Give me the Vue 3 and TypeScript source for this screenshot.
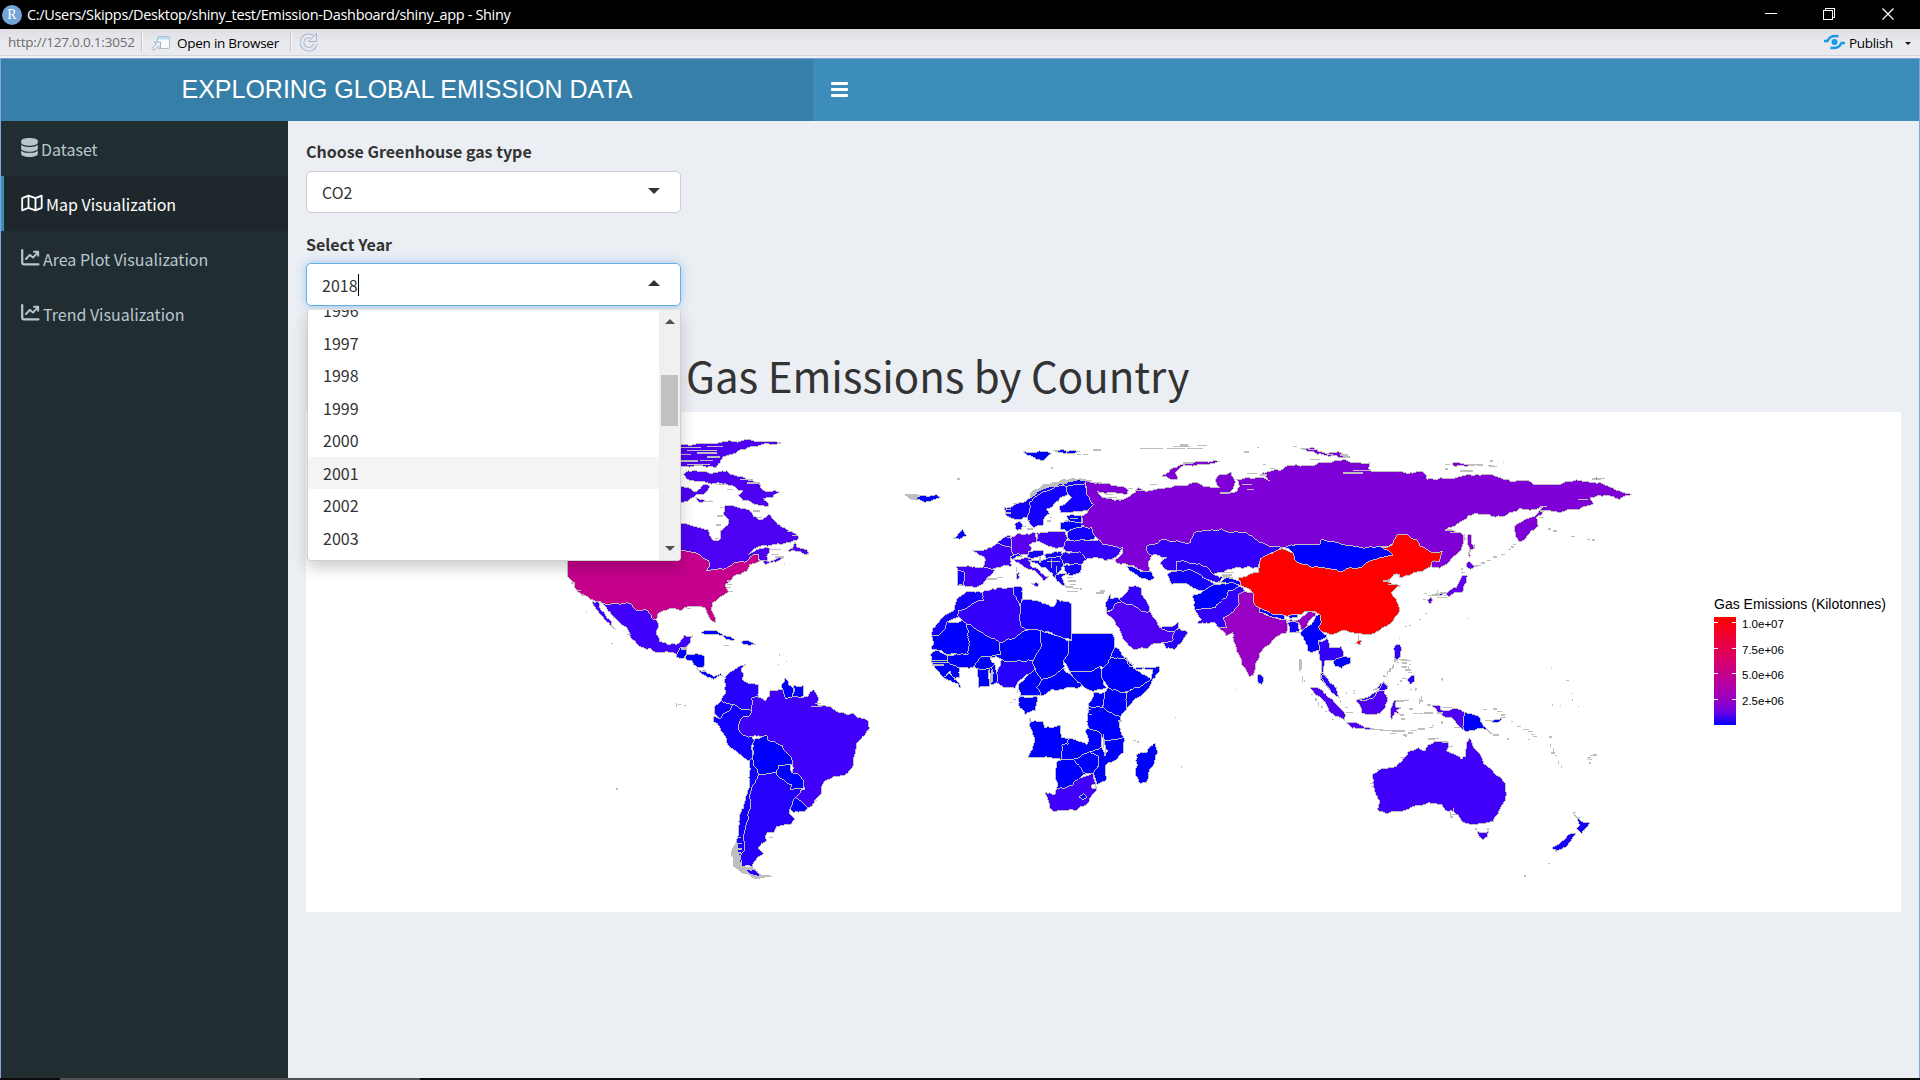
<script setup lang="ts">
type Shape = [fill: string, points: string]
interface Layer {
  x: number
  y: number
  shapes: Shape[]
  specks: string
}

const years: number[] = [1996, 1997, 1998, 1999, 2000, 2001, 2002, 2003]
const ticks: string[] = ['1.0e+07', '7.5e+06', '5.0e+06', '2.5e+06']

const B0 = '#0000ff'
const B1 = '#1400ff'
const B2 = '#2600fd'
const B3 = '#3200fb'
const V0 = '#4000f9'
const V1 = '#4e00f3'
const RU = '#7f00d6'
const GR = '#bebebe'

// Outlines are stored in thirds of a pixel, relative to the origin of each layer.
const layers: Layer[] = [
  {
    x: 540,
    y: 420,
    shapes: [
      [V1, '400,72 423,71 470,68 540,64 605,59 660,61 722,66 690,70 650,76 610,86 575,100 550,108 540,125 530,138 480,134 423,138 400,138'],
      [V1, '430,160 445,150 500,152 560,150 590,165 640,180 660,190 680,212 720,214 700,228 670,232 685,245 685,257 650,250 610,240 595,222 610,210 580,195 540,187 500,185 480,180 455,180 440,175'],
      [V1, '410,195 445,200 460,212 490,190 510,195 500,213 470,220 445,240 410,243'],
      [V1, '466,228 490,236 520,241 480,245'],
      [V1, '400,300 423,306 450,312 475,320 505,324 508,340 520,358 535,360 543,350 540,330 565,310 566,295 550,280 555,255 590,258 610,262 630,270 640,285 655,295 675,290 688,278 700,295 720,312 740,325 770,340 775,355 750,365 720,370 670,372 640,385 625,400 650,385 685,380 690,390 680,405 685,418 660,420 655,400 640,402 625,418 600,422 570,435 540,443 510,450 500,450 508,435 505,418 480,402 450,392 423,390 400,390'],
      [V1, '745,392 765,362 770,378 800,385 805,402 780,392'],
      [V1, '668,418 700,418 732,408 695,424 676,430'],
      ['#c5008c', '82,390 82,420 82,465 95,480 105,500 125,520 153,535 180,542 215,548 240,550 262,545 290,568 315,566 340,595 350,598 352,580 370,570 390,562 425,568 440,558 480,556 500,568 505,585 515,600 526,606 526,590 515,560 517,545 545,525 565,512 558,490 575,475 590,460 620,452 630,430 658,422 655,400 640,402 625,418 600,422 570,435 540,443 510,450 500,450 508,435 505,418 480,402 450,392 423,390'],
      [V0, '156,540 176,542 178,558 200,590 213,600 218,618 229,628 215,617 190,590 175,570'],
      [V0, '180,542 215,548 240,550 262,545 290,568 315,566 340,595 350,598 350,640 360,662 385,672 410,670 425,655 430,645 458,644 450,665 440,678 420,680 410,700 380,692 350,695 310,680 275,655 268,635 240,605 205,570 190,548'],
      [B0, '410,700 420,680 440,678 440,700 430,712 410,710'],
      [B0, '440,700 470,698 495,708 490,740 470,738 455,720 435,712'],
      [B0, '470,742 495,752 520,766 542,757 555,770 540,764 520,775 480,755'],
      [B0, '484,636 510,628 540,636 585,656 562,656 530,640'],
      [B0, '603,662 625,658 648,670 630,674 612,672'],
      [B2, '557,768 575,750 600,735 618,730 603,745 608,775 635,788 655,790 655,828 635,832 635,870 605,865 578,850 545,838 557,815'],
      [B1, '545,838 578,850 570,868 548,880 540,893 525,880 525,855'],
      [B1, '548,880 570,868 578,850 605,865 635,870 628,885 605,890 595,915 605,938 635,948 643,960 638,1010 630,1018 600,1000 570,980 555,945 540,920 520,900 520,885 540,893'],
      [V0, '635,832 655,828 675,840 690,825 690,810 728,806 735,832 770,828 805,826 820,806 835,830 830,850 870,855 890,872 940,876 965,892 985,900 988,920 965,950 948,970 945,1000 938,1040 915,1062 880,1068 848,1090 845,1115 825,1140 805,1160 790,1145 765,1130 795,1105 790,1080 775,1058 755,1055 757,1020 745,1000 730,985 728,975 685,960 680,942 655,945 635,948 605,938 595,915 605,890 628,885 635,870'],
      [B0, '725,790 735,770 747,785 745,790 760,800 757,828 740,832 730,810'],
      [B0, '760,795 792,793 790,825 757,828'],
      [B0, '643,955 680,942 685,960 728,975 730,985 745,1000 757,1020 755,1032 715,1035 708,1055 690,1058 655,1062 640,1030 638,1010'],
      [B0, '708,1055 715,1035 752,1032 755,1055 775,1058 790,1080 792,1100 750,1105 755,1090 720,1072'],
      [B0, '765,1130 805,1160 795,1172 760,1175 750,1165 755,1140'],
      [B2, '655,1062 690,1058 708,1055 720,1072 755,1090 750,1105 792,1100 765,1130 750,1165 748,1178 765,1195 752,1212 710,1215 700,1235 680,1236 680,1260 655,1280 672,1298 640,1325 638,1340 605,1335 600,1310 612,1290 612,1240 625,1190 632,1160 628,1130 645,1085'],
      [B1, '630,1018 638,1010 640,1030 655,1062 645,1085 628,1130 632,1160 625,1190 612,1240 612,1290 600,1310 605,1335 580,1330 578,1300 592,1250 598,1195 612,1160 622,1110 630,1060'],
      [GR, '574,1300 590,1262 596,1300 604,1340 640,1342 662,1362 695,1367 655,1374 610,1358 580,1336'],
      [B2, '618,1345 645,1345 660,1365 632,1360'],
    ],
    specks:
      'M423 80h60M440 88h90M423 100h30M470 96h60M500 108h40M423 120h50M480 118h40M440 130h70M500 76h50M600 176h40M620 186h40M560 205h20M530 190h30M540 260h8M530 285h18M528 312h14M524 352h12M640 270h20M650 290h16M690 386h34M694 400h24M704 408h28M560 480h14M560 490h16M560 500h14M566 512h12M92 486h12M110 508h12M122 522h10M138 572h3M213 668h5M410 846v12M414 850h10M432 854h5M552 674h14M718 698v8M738 722h3M715 730h3M590 1250h14M586 1268h20M584 1284h22M580 1296h22M231 1102v5M812 856h34M826 848h16M822 1138h8M688 1250h10M420 1 M423 684h14M486 748h12M732 430h3M262 640h10M440 562h14M800 398h8M740 332h20M756 344h16',
  },
  {
    x: 900,
    y: 430,
    shapes: [
      [GR, '15,192 40,190 60,195 50,208 25,200'],
      [B0, '45,203 60,195 110,190 122,200 75,214'],
      [B0, '160,322 175,308 188,295 200,315 180,325'],
      [B0, '370,62 430,62 455,68 430,90 400,78'],
      [B0, '460,60 490,56 525,58 540,62 500,66'],
      [GR, '390,195 400,178 430,162 480,150 520,143 575,148 560,158 480,160 430,180 400,200'],
      [B1, '312,230 345,220 390,200 430,174 480,158 520,150 565,152 555,158 500,168 470,165 440,180 410,195 388,215 388,240 380,258 345,265 320,255'],
      [B1, '388,215 410,195 440,180 470,165 500,168 505,190 480,200 440,235 450,248 430,265 430,282 400,290 385,270 380,258 388,240'],
      [B1, '500,168 555,158 560,185 570,200 580,220 560,240 520,242 482,245 480,225 515,200 505,190'],
      [B1, '345,280 360,270 367,282 365,295 350,298'],
      ['#5800f0', '330,318 355,308 405,305 410,330 388,342 395,355 385,370 340,370 335,350'],
      [V0, '410,305 450,300 495,303 503,320 500,348 450,348 410,330'],
      [B2, '290,335 310,320 330,312 335,350 315,345'],
      [V0, '215,358 245,360 290,338 315,345 335,350 340,370 330,380 335,405 300,410 280,414 250,408 255,380'],
      [V0, '170,405 200,405 250,408 285,416 262,440 250,460 225,470 200,468 190,462 195,425 172,420'],
      [B1, '172,420 195,425 190,462 172,462'],
      [V0, '340,385 380,378 395,385 390,400 430,430 445,440 430,450 415,430 375,410 360,398'],
      [V0, '393,458 418,458 408,468'],
      [V0, '348,428 358,425 358,442 350,445'],
      [B1, '330,375 355,368 370,378 335,385'],
      [B1, '385,362 430,358 430,372 380,380'],
      [B1, '432,372 485,360 485,378 440,385'],
      [B1, '385,390 440,382 485,378 490,402 470,430 495,430 465,440 440,412 415,400'],
      [B2, '480,380 495,362 540,362 560,385 545,402 490,400'],
      [B1, '490,402 545,402 540,425 500,430'],
      [B1, '465,436 510,426 485,440 497,466 480,455'],
      [B3, '490,355 500,328 545,325 580,328 610,322 640,345 668,350 660,370 620,390 590,380 560,385 540,362 500,362'],
      [B1, '500,300 545,288 575,290 588,310 580,326 545,325 505,326'],
      [B0, '480,275 505,270 545,272 545,288 500,302 480,295'],
      [B0, '500,256 545,252 545,272 505,270'],
      [B1, '165,535 170,510 200,480 245,485 250,510 175,540 175,558 145,572 130,600 120,612 95,612 110,580 135,552'],
      [B0, '95,615 118,612 138,590 140,572 200,570 200,580 205,670 145,672 125,660 95,655 100,640'],
      [B3, '245,485 265,478 300,468 342,468 340,490 360,525 360,580 385,597 300,635 200,580 175,558 175,540 250,510'],
      [B1, '342,468 368,470 365,510 360,525 340,490'],
      [B1, '360,525 368,505 400,508 440,520 460,528 470,505 515,518 515,628 420,598 385,597 360,580'],
      [B0, '515,608 638,608 645,640 632,680 608,710 600,705 575,722 510,722 490,690 505,668 505,630 515,628'],
      [B0, '420,598 505,630 505,668 490,690 492,710 460,735 425,745 405,710 400,688 425,640'],
      [B0, '300,635 385,597 420,598 425,640 400,688 350,690 305,685 270,678 303,670'],
      [B0, '200,580 300,635 303,670 270,678 240,680 215,710 180,710 145,695 140,672 205,670'],
      [B0, '90,670 110,658 140,672 145,695 95,695'],
      [B0, '95,695 145,695 180,710 180,740 160,740 150,720 130,740 110,715'],
      [B0, '130,740 150,725 160,740 182,765 182,772'],
      [B0, '232,712 268,712 270,765 235,770'],
      [B0, '215,710 240,680 270,678 285,700 268,712 232,712'],
      [B0, '268,712 285,700 290,725 290,755 270,760'],
      [B0, '276,712 276,756'],
      [B2, '290,725 305,685 350,690 400,688 405,710 385,730 355,752 345,772 320,770 290,755'],
      [B0, '355,760 385,730 405,710 425,745 410,770 425,795 360,795'],
      [B0, '410,770 425,745 460,735 492,710 510,730 545,765 490,775 455,775 425,795'],
      [B0, '510,722 575,722 600,705 608,740 620,770 580,782 555,770 530,750'],
      [B0, '632,680 680,680 700,710 745,740 755,742 720,768 670,785 625,770 605,740 608,710'],
      [B0, '645,650 665,670 700,700 690,708 680,680 632,680'],
      [B0, '700,712 780,705 765,740 740,780 700,810 680,830 680,785 720,768 755,742 757,715'],
      [B0, '612,785 625,770 670,785 680,785 680,830 660,858 608,828 610,800'],
      [B0, '565,825 580,785 612,785 608,828'],
      [B0, '565,825 608,828 660,858 662,900 672,920 615,928 600,905 565,892 562,860'],
      [B0, '360,795 410,795 408,838 375,850 355,822'],
      [B0, '390,875 430,872 435,890 482,885 485,920 505,922 505,940 485,942 485,985 385,978 405,925'],
      [B0, '485,942 505,940 505,922 560,940 565,930 555,900 565,892 600,905 605,950 570,962 520,985 485,985'],
      [B0, '475,990 520,985 560,1028 540,1040 520,1062 470,1072 468,1030'],
      [B0, '520,985 570,962 595,975 597,1005 580,1028 560,1028'],
      [B0, '615,928 672,920 672,965 615,1005 620,1045 590,1060 580,1028 597,1005 595,975 570,962 605,950 615,975 622,960'],
      [V0, '435,1085 466,1090 470,1072 520,1062 540,1040 580,1028 587,1058 590,1075 560,1120 530,1138 462,1143 447,1130'],
      [B0, '537,1097 550,1088 560,1098 548,1107'],
      ['#ffffff', '575,1062 588,1062 590,1074 578,1074'],
      [B0, '710,970 740,965 765,935 773,960 755,1010 740,1055 715,1055 705,1025 712,1000'],
    ],
    specks:
      'M170 144h10M453 111h5M530 70h14M550 70h14M580 57h24M720 53h50M760 52h28M800 52h54M820 47h50M840 42h24M860 52h50M890 44h30M318 236h14M316 246h16M340 218h16M380 294h20M366 286h12M440 270h14M450 260h6M350 408v14M260 444h30M290 440h18M500 440h18M505 450h24M510 460h18M498 468h22M500 482h34M520 472h16M540 474h6M588 486h24M600 480h14M620 385h20M390 268h-10M575 155h30M614 190h26M620 200h30M650 206h24M276 716v38M330 815h6M340 806h8M352 778v8M390 862v10M610 910v40M616 950v24M560 835h12M566 850h10M655 870h12M96 688h44M96 702h36M700 928h8M712 933h5M824 859h3M845 1006v6M176 460h10M436 436h10M440 392h40M455 385v25M470 405v20M420 376v20M320 320h14M496 268h14M510 262h24',
  },
  {
    x: 1060,
    y: 430,
    shapes: [
      [RU, '75,148 120,158 170,165 205,178 200,190 160,185 110,180 135,200 165,208 190,205 225,185 235,170 260,182 300,172 380,165 400,155 480,170 465,150 480,130 515,125 522,145 522,172 510,186 530,182 538,165 530,145 560,138 600,140 630,150 605,125 660,118 680,105 800,95 850,85 930,95 925,112 935,122 1025,122 1080,120 1090,122 1100,145 1190,140 1220,130 1300,132 1330,145 1400,148 1420,160 1500,160 1520,152 1600,155 1660,172 1680,180 1715,190 1680,205 1650,195 1615,192 1590,200 1600,220 1550,235 1510,242 1450,240 1430,260 1435,285 1420,298 1375,332 1362,295 1370,280 1430,250 1450,228 1410,238 1380,232 1330,257 1290,252 1225,255 1185,285 1155,297 1200,305 1212,320 1205,350 1160,400 1140,412 1115,408 1115,392 1140,390 1148,362 1110,362 1080,345 1070,325 1045,312 1010,312 998,340 960,346 905,350 830,335 785,325 780,340 710,340 665,350 605,335 560,305 515,305 485,293 400,308 390,335 300,328 260,345 265,368 275,372 265,395 270,420 240,415 165,392 185,370 188,350 160,345 130,342 100,310 95,290 65,280 65,255 85,240 100,220 80,190'],
      [RU, '306,136 330,115 370,100 430,93 480,90 420,100 370,105 345,125 352,147 325,142'],
      [RU, '720,52 755,48 790,65 850,70 870,78 810,76 760,62'],
      [B3, '200,485 205,468 225,464 245,472 245,490 262,515 270,540 245,542 215,520 185,512 178,503'],
      [B1, '135,518 150,488 152,505 178,503 185,512 165,518 160,535 140,542'],
      [V1, '137,545 160,535 165,518 185,512 215,520 245,542 270,540 300,590 320,600 345,600 340,628 310,635 275,640 265,652 220,655 200,635 180,600 165,570'],
      [B2, '300,590 330,588 355,572 350,600 320,600'],
      [B2, '345,600 355,592 385,605 365,635 345,655 318,652 310,635 340,628'],
      [B0, '200,405 240,420 275,422 285,440 270,450 230,432'],
      [B3, '260,345 300,328 390,335 400,308 485,293 515,305 560,305 605,335 665,350 650,365 625,370 600,390 595,410 570,408 520,412 490,425 460,430 430,405 370,388 350,390 350,420 325,418 300,398 320,378 290,372 265,368'],
      [B2, '350,390 370,388 430,405 460,430 490,440 470,455 440,445 410,425 385,415 350,420'],
      [B1, '322,430 350,420 385,415 410,425 440,445 465,460 430,480 400,472 370,458 335,460'],
      [B0, '470,455 505,440 535,448 545,465 510,462 495,455'],
      [B0, '400,490 430,480 465,460 510,455 540,465 505,480 500,500 465,530 405,538'],
      [B3, '405,538 465,530 500,500 505,480 540,465 555,480 535,490 535,525 500,555 490,560 500,588 475,590 465,575 410,575 425,565'],
      ['#9800c3', '475,590 500,588 490,560 500,555 535,525 535,490 555,480 580,485 580,510 597,530 597,542 640,560 680,565 680,605 640,625 600,665 590,690 580,735 568,738 545,700 525,640 518,605 500,615'],
      ['#9800c3', '685,568 720,565 745,540 768,545 740,590 725,600 718,575 690,574'],
      [B0, '597,530 640,550 675,555 675,565 640,560 600,545'],
      [B0, '685,552 715,550 712,560 688,562'],
      [B1, '680,572 715,575 718,600 690,605'],
      ['#ff0000', '665,353 700,365 705,388 755,410 850,420 905,408 920,395 960,378 998,372 975,355 960,350 998,340 1010,312 1045,312 1070,325 1080,345 1110,362 1148,362 1140,390 1115,392 1110,408 1060,425 1020,440 1020,430 1000,432 978,450 1000,462 1022,464 994,485 1005,500 1015,520 1018,540 990,580 960,598 910,610 870,605 850,598 815,612 800,605 775,590 785,575 778,550 745,540 715,550 675,555 640,550 597,530 580,510 580,485 555,470 545,465 535,440 595,425 600,390 625,370 650,358'],
      ['#ff0000', '886,638 895,630 905,630 900,642'],
      [B0, '675,350 710,340 780,340 785,325 830,335 905,350 960,346 975,355 998,372 960,378 920,395 905,408 850,420 755,410 705,388 700,365'],
      [B0, '725,600 745,585 765,560 778,550 785,575 775,590 800,612 800,620 775,630 780,660 745,662 735,630 722,612'],
      [B3, '775,635 800,620 810,650 845,645 852,680 820,690 795,690 788,725 805,745 815,762 830,775 830,790 812,778 782,745 785,720 778,680'],
      [B0, '822,690 840,680 872,680 870,698 845,712 825,705'],
      [B1, '593,732 602,730 611,748 605,760 595,757'],
    ],
    specks:
      'M225 178h24M270 160h20M205 172h14M700 47h10M745 56h30M800 70h20M840 72h24M552 63h16M590 50h8M610 100h8M630 112h16M560 128h30M600 132h20M545 160h30M560 175h22M850 126h60M880 118h50M482 424h40M486 432h30M490 438h20M500 440h20M720 685v22M724 700v14M728 738v14M896 612v16M527 776h3M370 96h30M110 485h14M750 85h30M480 186h30M970 450h20M984 460h16M700 604h20',
  },
  {
    x: 1340,
    y: 430,
    shapes: [
      [RU, '385,310 393,312 396,340 404,352 392,355 388,380 386,345'],
      [RU, '335,100 360,96 410,101 380,106 345,106'],
      [RU, '755,144 770,140 794,141 775,145'],
      [RU, '445,104 470,106 450,108'],
      ['#6000ec', '380,395 388,392 398,402 415,405 392,416 380,408'],
      ['#6000ec', '368,432 382,434 380,455 368,482 345,484 325,497 318,486 350,468'],
      ['#6000ec', '262,506 274,498 278,508 268,520'],
      [V0, '285,488 316,486 300,494'],
      [B3, '162,650 172,640 182,645 182,668 172,690 162,672'],
      [B2, '202,745 212,735 225,735 224,750 212,760'],
      [B3, '98,778 115,768 130,752 146,766 130,776'],
    ],
    specks:
      'M0 70h10M10 76h20M315 100h14M315 114h10M360 120h40M450 90h8M489 94h3M410 102h20M624 294h10M640 300h10M694 317h12M742 325h8M756 327h10M714 205h30M600 226h22M600 240h10M598 260h14M505 355h8M512 348h10M520 340h8M482 370h12M460 378h10M440 388h12M424 396h12M412 404h10M362 414h8M364 424h10M292 478v10M276 492h24M300 486h20M252 488h8M248 506h10M264 494h20M290 500h30M312 494h10M254 548h6M238 566h6M385 562h3M206 584h8M195 586h6M178 622h2M168 694h10M176 686h24M186 696h16M206 700h8M186 708h14M196 716h16M204 724h12M186 742h14M160 700v10M150 712v10M142 724v8M132 736h8M170 760h8M180 750h6M306 740v8M634 712h3M679 749h7M228 772v6M374 310v20M370 322h12M404 340v14M316 296h20M330 304h20M108 602h10',
  },
  {
    x: 1280,
    y: 600,
    shapes: [
      [V1, '90,258 115,262 150,290 180,320 195,340 195,360 165,345 130,300'],
      [B3, '122,215 150,245 170,260 178,290 155,275 130,240'],
      [V1, '197,365 240,370 282,384 230,382'],
      [V1, '228,295 260,297 300,265 312,270 322,300 300,338 245,335'],
      [B3, '228,295 260,290 300,262 310,245 325,258 312,268 298,270 278,294 252,300'],
      [V1, '335,358 333,320 342,300 388,297 346,304 348,318 364,320 350,328 364,345 345,332'],
      [V1, '455,315 480,315 483,326 520,323 553,333 553,388 540,378 515,350 490,345 470,328'],
      [B0, '553,333 600,350 610,375 640,400 600,382 575,390 553,390'],
      [B0, '634,362 660,354 668,348 655,364'],
      [V0, '278,520 300,505 350,495 390,450 415,440 435,450 445,430 470,420 505,422 500,450 545,475 558,465 560,425 567,410 580,440 600,460 610,488 640,510 675,545 680,580 665,615 640,662 575,672 545,662 525,635 500,630 485,612 445,605 410,612 375,628 315,637 295,630 298,600 280,550'],
      [V0, '590,692 628,692 622,708 610,716 600,710'],
      [B1, '880,638 905,662 930,666 918,680 905,697 890,682 900,672'],
      [B1, '888,698 872,722 850,740 830,748 815,742 850,718 872,696'],
      [B0, '920,475 936,475'],
    ],
    specks:
      'M64 178v16M60 196v14M68 226v6M74 238v4M94 280h6M108 290v10M116 302v12M124 318h6M134 332h8M196 320h8M198 334h22M200 278v-4M218 268h8M224 274v6M182 296v10M280 386h30M300 388h50M336 390h40M330 398h18M370 402h10M374 406h8M384 396h14M392 388h20M414 384h20M448 380h10M456 374h6M386 324h14M400 338h14M418 338h10M432 336h26M418 290v20M424 286v18M418 300h12M350 298h30M360 342h12M364 354h10M440 312h14M485 320h30M470 336h18M486 360v10M522 380h20M610 326h10M640 324h10M650 332h16M664 342h12M670 350h8M614 358h28M694 362h6M710 376h12M730 386h16M744 392h16M752 400h14M760 406h10M640 402h18M680 414h6M745 416h5M808 408h8M812 430v8M820 440v16M814 456h12M824 464h8M836 480v8M844 494v6M920 470h14M930 464h12M940 462h10M926 486h6M858 239h8M875 276v4M878 294v6M840 314h4M816 312h3M894 316h3M814 202h3M565 52h2M487 232v8M393 264v4M406 262v8M345 170v14M362 178h30M362 196h10M374 208h20M386 196v14M445 414h20M460 412h18M486 424h22M508 436h10M362 470h14M270 548h8M272 556h8M290 506h10M512 632v14M514 640h16M520 620v14M510 648h8M584 684h6M622 684h6M878 634h10M890 650h12M804 787h6M732 825h6M824 750h6M156 356h6M312 222v6M320 212h8M330 202h8M338 194v8',
  },
]

// Stable pseudo-random value, symmetric in both end points so shared borders agree.
function jitter(a: number[], b: number[], ox: number, oy: number, k: number): number {
  const s = Math.sin((a[0] + b[0] + ox * 6) * 12.9898 + (a[1] + b[1] + oy * 6) * 78.233 + k * 37.7) * 43758.5453
  return s - Math.floor(s) - 0.5
}

function split(a: number[], b: number[], l: Layer, out: number[][]): void {
  const len = Math.hypot(b[0] - a[0], b[1] - a[1])
  const straight = a[0] === b[0] || a[1] === b[1]
  if (len < 11 || (straight && len > 60)) {
    out.push(b)
    return
  }
  const amp = Math.min(len * 0.28, 9)
  const mid = [
    (a[0] + b[0]) / 2 + jitter(a, b, l.x, l.y, 1) * amp,
    (a[1] + b[1]) / 2 + jitter(a, b, l.x, l.y, 2) * amp,
  ]
  split(a, mid, l, out)
  split(mid, b, l, out)
}

function outline(points: string, l: Layer): string {
  const pts = points.split(' ').map((p) => p.split(',').map(Number))
  const out: number[][] = []
  pts.forEach((p, i) => split(p, pts[(i + 1) % pts.length], l, out))
  return out.map((p) => p[0].toFixed(1) + ',' + p[1].toFixed(1)).join(' ')
}
</script>

<template>
  <div class="window">
    <header class="titlebar">
      <span class="r-logo">R</span>
      <span class="path">C:/Users/Skipps/Desktop/shiny_test/Emission-Dashboard/shiny_app - Shiny</span>
      <svg class="win-buttons" width="150" height="29" viewBox="0 0 150 29" fill="none" stroke="#fff" stroke-width="1">
        <path d="M15 13.5h12M73.500 10.500h9v9h-9zM75.500 10.500v-2h9v9h-2" shape-rendering="crispEdges" />
        <path d="M132.500 8.500l11 11M143.500 8.500l-11 11" stroke-width="1.200" />
      </svg>
    </header>

    <div class="toolbar">
      <span class="url">http://127.0.0.1:3052</span>
      <i class="sep"></i>
      <svg class="open-icon" width="20" height="16" viewBox="0 0 20 16">
        <rect x="6.500" y="1.500" width="12" height="12" rx="1.500" fill="#f6fafd" stroke="#a9bfd2" />
        <path d="M7 2h11v2.500H7z" fill="#b9dcf3" />
        <path d="M.8 13.500l4.500-4.500-2-2h6.200v6l-2-2-4.500 4.200z" fill="#eef1f6" stroke="#9aa9be" stroke-width=".9" />
      </svg>
      <span class="open">Open in Browser</span>
      <i class="sep second"></i>
      <svg class="reload" width="20" height="20" viewBox="0 0 20 20" fill="none">
        <path d="M14.200 5.500A6.700 6.700 0 1 0 16.300 12" stroke="#a9b6cb" stroke-width="4.600" />
        <path d="M14.200 5.500A6.700 6.700 0 1 0 16.300 12" stroke="#e3e9f2" stroke-width="2.800" />
        <path d="M17.500 1.500v8h-8z" fill="#e3e9f2" stroke="#a9b6cb" />
      </svg>
      <div class="publish">
        <svg width="21" height="16" viewBox="0 0 21 16" fill="none" stroke="#1a9be8" stroke-width="2.400">
          <circle cx="10.500" cy="8" r="3" fill="#1a9be8" stroke="none" />
          <path d="M0 7h3.500C5 3 8 1.400 14.500 2.200M21 9h-3.500C16 13 13 14.600 6.500 13.800" />
        </svg>
        <span>Publish</span>
        <i class="caret-small"></i>
      </div>
    </div>

    <div class="app">
      <header class="main-header">
        <div class="logo">EXPLORING GLOBAL EMISSION DATA</div>
        <nav class="navbar"><span class="burger"><i></i><i></i><i></i></span></nav>
      </header>
      <div class="body">
        <aside class="sidebar">
          <a class="item">
            <svg width="17" height="19" viewBox="0 0 448 512" fill="currentColor">
              <path d="M448 80v48c0 44.200-100.300 80-224 80S0 172.200 0 128V80C0 35.800 100.300 0 224 0S448 35.800 448 80zM393.200 214.700c20.800-7.400 39.900-16.900 54.800-28.600V288c0 44.200-100.300 80-224 80S0 332.200 0 288V186.100c14.900 11.800 34 21.200 54.800 28.600C99.700 230.700 159.500 240 224 240s124.300-9.300 169.200-25.300zM0 346.100c14.900 11.800 34 21.200 54.800 28.600C99.700 390.700 159.500 400 224 400s124.300-9.300 169.200-25.300c20.800-7.400 39.900-16.900 54.800-28.600V432c0 44.200-100.300 80-224 80S0 476.200 0 432V346.100z" />
            </svg>
            <span class="t1">Dataset</span>
          </a>
          <a class="item active">
            <svg width="22" height="18" viewBox="0 0 22 18" fill="none" stroke="currentColor" stroke-width="1.800" stroke-linejoin="round">
              <path d="M1.200 4.200L7.500 1.600l7 2.600 6.200-2.600v12.200l-6.200 2.600-7-2.600-6.300 2.600zM7.500 1.600v12.200M14.500 4.200v12.200" />
            </svg>
            <span class="t2">Map Visualization</span>
          </a>
          <a class="item">
            <svg width="19" height="17" viewBox="0 0 19 17" fill="none" stroke="currentColor" stroke-width="2.200" stroke-linecap="round" stroke-linejoin="round">
              <path d="M1.200 1.200v12.300q0 1.800 1.800 1.800h14.500" />
              <path d="M5 10l3.800-4.200 3.200 2.800 4.800-5.200M13 2.700h4.200v4" stroke-width="1.900" />
            </svg>
            <span class="t3">Area Plot Visualization</span>
          </a>
          <a class="item">
            <svg width="19" height="17" viewBox="0 0 19 17" fill="none" stroke="currentColor" stroke-width="2.200" stroke-linecap="round" stroke-linejoin="round">
              <path d="M1.200 1.200v12.300q0 1.800 1.800 1.800h14.500" />
              <path d="M5 10l3.800-4.200 3.200 2.800 4.800-5.200M13 2.700h4.200v4" stroke-width="1.900" />
            </svg>
            <span class="t4">Trend Visualization</span>
          </a>
        </aside>

        <main class="content">
          <label class="label">Choose Greenhouse gas type</label>
          <div class="select"><span>CO2</span><i class="caret"></i></div>
          <label class="label second-label">Select Year</label>
          <div class="select focus">
            <span class="typed">2018</span><i class="caret up"></i>
            <div class="dropdown">
              <div class="options">
                <div v-for="y in years" :key="y" class="option" :class="{ hot: y === 2001 }">{{ y }}</div>
              </div>
              <div class="scrollbar">
                <i class="arrow up"></i>
                <i class="thumb"></i>
                <i class="arrow down"></i>
              </div>
            </div>
          </div>
          <h1 class="heading">Gas Emissions by Country</h1>
          <section class="plot">
            <svg class="map" width="1390" height="500" viewBox="306 411 1390 500" shape-rendering="crispEdges">
              <g
                v-for="(l, i) in layers"
                :key="i"
                :transform="`translate(${l.x} ${l.y}) scale(0.33333)`"
                stroke="#bebebe"
                stroke-width="3"
              >
                <polygon v-for="(s, j) in l.shapes" :key="j" :fill="s[0]" :points="outline(s[1], l)" />
                <path :d="l.specks" fill="none" stroke-width="4" />
              </g>
            </svg>
            <div class="legend">
              <div class="legend-title">Gas Emissions (Kilotonnes)</div>
              <div class="scale">
                <div class="bar"><i v-for="t in ticks" :key="t"></i></div>
                <div class="tick-labels"><span v-for="t in ticks" :key="t">{{ t }}</span></div>
              </div>
            </div>
          </section>
        </main>
      </div>
    </div>
    <footer class="taskbar"><i></i></footer>
  </div>
</template>

<style>
html,
body {
  margin: 0;
  overflow: hidden;
}
</style>

<style scoped>
* {
  box-sizing: border-box;
}
.window {
  width: 1920px;
  height: 1080px;
  display: flex;
  flex-direction: column;
  overflow: hidden;
  font-family: 'Noto Sans CJK SC', 'Noto Sans', sans-serif;
  white-space: nowrap;
}
.titlebar {
  height: 29px;
  background: #000;
  color: #fff;
  display: flex;
  align-items: center;
  font: 14.500px/29px 'Open Sans', sans-serif;
}
.r-logo {
  width: 20px;
  height: 20px;
  margin-left: 2px;
  border-radius: 50%;
  background: #73a5da;
  font: 14px/20px 'Liberation Serif', serif;
  text-align: center;
}
.path {
  margin-left: 5px;
  letter-spacing: -0.330px;
}
.win-buttons {
  margin-left: auto;
  margin-right: 20px;
}
.toolbar {
  height: 30px;
  display: flex;
  align-items: center;
  padding: 0 8px 4px;
  border-bottom: 1px solid #7f9fd6;
  background: linear-gradient(#dfdde3, #e8e9ed 12px, #ebebef 26px, #d3d5dc 26px, #d3d5dc 27px, #eef0f5 27px);
  font: 13.500px/24px 'Open Sans', sans-serif;
  color: #000;
}
.url {
  color: #6b6b6b;
  width: 133px;
  letter-spacing: -0.200px;
}
.sep {
  width: 2px;
  height: 20px;
  background: #c6c7cc;
  border-right: 1px solid #f7f7f9;
}
.open-icon {
  margin-left: 8px;
  margin-top: 2px;
}
.open {
  margin: 3px 0 0 6px;
  width: 113px;
  letter-spacing: -0.250px;
}
.reload {
  margin-left: 7px;
}
.publish {
  margin: 3px 1px 0 auto;
  display: flex;
  align-items: center;
}
.publish span {
  margin-left: 4px;
  width: 56px;
  letter-spacing: -0.300px;
}
.publish svg {
  margin-top: -3px;
}
.caret-small {
  border: 3px solid transparent;
  border-top-color: #111;
  border-bottom: 0;
}
.app {
  height: 1019px;
  border-left: 1px solid #7fa6de;
  border-right: 1px solid #7fa6de;
}
.main-header {
  height: 62px;
  display: flex;
}
.logo {
  width: 812px;
  background: #367fa9;
  color: #fff;
  text-align: center;
  font: 25px/61px 'Liberation Sans', sans-serif;
}
.navbar {
  flex: 1;
  background: #3c8dbc;
  padding: 23px 0 0 18px;
}
.burger {
  width: 17px;
  display: flex;
  flex-direction: column;
  gap: 3px;
}
.burger i {
  height: 3px;
  border-radius: 1px;
  background: #fff;
}
.body {
  height: 957px;
  display: flex;
}
.sidebar {
  width: 287px;
  background: #222d32;
}
.item {
  height: 55px;
  display: flex;
  align-items: center;
  padding: 0 0 0 17px;
  border-left: 3px solid transparent;
  color: #b8c7ce;
  font-size: 16px;
  line-height: 24px;
}
.item span {
  margin-left: 3px;
}
.item svg {
  flex: none;
  margin-top: -2px;
}
.item.active {
  background: #1e282c;
  border-left-color: #3c8dbc;
  color: #fff;
}
.content {
  flex: 1;
  padding: 18px 18px 0;
  background: #ebeef3;
  color: #333;
}
.label {
  display: block;
  height: 25px;
  font-size: 16px;
  line-height: 25px;
  font-weight: 700;
}
.select {
  position: relative;
  width: 375px;
  height: 42px;
  margin-top: 7px;
  padding: 0 20px 0 15px;
  border: 1px solid #ccc;
  border-radius: 5px;
  background: #fff;
  display: flex;
  align-items: center;
  justify-content: space-between;
  font-size: 16px;
  line-height: 40px;
}
.second-label {
  margin-top: 19px;
}
.select.focus {
  height: 43px;
  margin-top: 6px;
  border-color: #66afe9;
  box-shadow: 0 0 10px rgba(102, 175, 233, 0.6);
}
.typed {
  line-height: 22px;
  border-right: 1px solid #000;
}
.caret {
  border: 6px solid transparent;
  border-top-color: #333;
  border-bottom: 0;
  margin-top: -2px;
}
.caret.up {
  border: 6px solid transparent;
  border-bottom-color: #333;
  border-top: 0;
  margin-top: -4px;
}
.dropdown {
  position: absolute;
  z-index: 3;
  left: 0;
  top: 45px;
  width: 374px;
  height: 252px;
  display: flex;
  overflow: hidden;
  background: #fff;
  border: 1px solid #d0d0d0;
  border-top-color: #e4e4e4;
  border-radius: 4px;
}
.select.focus::after {
  content: '';
  position: absolute;
  left: 0;
  top: 45px;
  width: 374px;
  height: 252px;
  border-radius: 4px;
  box-shadow: 0 7px 15px rgba(0, 0, 0, 0.2);
}
.options {
  flex: 1;
  margin-top: -16px;
}
.option {
  height: 32.500px;
  padding-left: 15px;
  line-height: 32px;
  font-size: 16px;
}
.option.hot {
  background: #f4f4f4;
}
.scrollbar {
  width: 21px;
  background: #f0f0f0;
  display: flex;
  flex-direction: column;
  align-items: center;
}
.arrow {
  border: 5px solid transparent;
}
.arrow.up {
  border-top: 0;
  border-bottom-color: #505050;
  margin-top: 9px;
}
.arrow.down {
  border-bottom: 0;
  border-top-color: #505050;
  margin-top: 120px;
}
.thumb {
  width: 17px;
  height: 51px;
  margin-top: 51px;
  background: #c1c1c1;
}
.heading {
  margin: 33px 0 0 380px;
  height: 73px;
  font-weight: 400;
  font-size: 42px;
  line-height: 72px;
}
.plot {
  width: 1595px;
  height: 500px;
  display: flex;
  background: #fff;
}
.map {
  flex: none;
  margin-right: 18px;
}
.legend {
  padding-top: 183px;
  font-family: 'Liberation Sans', sans-serif;
  color: #000;
}
.legend-title {
  font-size: 14px;
  line-height: 18px;
  height: 22px;
}
.scale {
  display: flex;
}
.bar {
  width: 22px;
  height: 108px;
  padding-top: 5px;
  background: linear-gradient(#ff0000, #e5004f 29%, #c7008a 52%, #9a00c2 76%, #6d00e2 88%, #0000ff);
}
.bar i {
  display: block;
  height: 1px;
  margin-bottom: 24.700px;
  border-left: 4px solid #fff;
  border-right: 4px solid #fff;
}
.tick-labels {
  margin: -6px 0 0 6px;
  display: flex;
  flex-direction: column;
}
.tick-labels span {
  height: 25.500px;
  font-size: 11.500px;
  line-height: 26px;
}
.taskbar {
  height: 2px;
  background: #0c0c0e;
  padding-left: 60px;
}
.taskbar i {
  display: block;
  width: 360px;
  height: 2px;
  background: #505052;
}
</style>
